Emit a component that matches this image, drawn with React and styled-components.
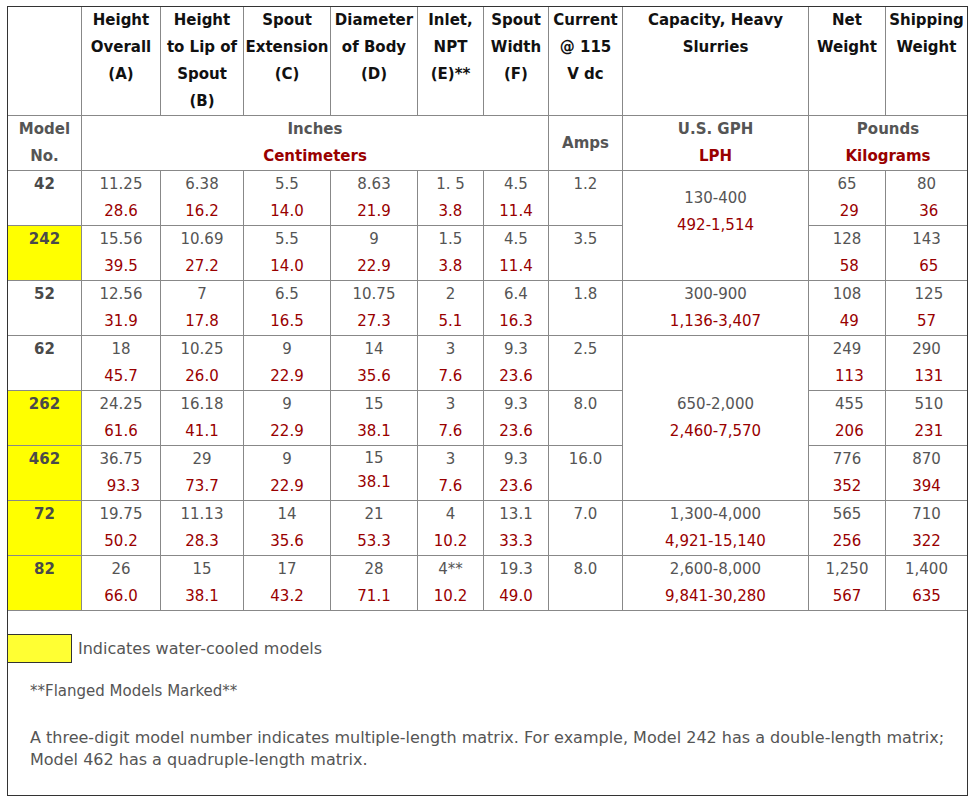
import React from "react";
import styled, { createGlobalStyle } from "styled-components";

const GlobalStyle = createGlobalStyle`
  body {
    margin: 0;
    background: #fff;
    font-family: "DejaVu Sans", Verdana, sans-serif;
  }
`;

const Page = styled.div`
  padding: 6px 6px 0 7px;
`;

const Frame = styled.div`
  width: 959px;
  border: 1px solid #333;
  padding-bottom: 24px;
`;

const Table = styled.table`
  width: 959px;
  table-layout: fixed;
  border-collapse: separate;
  border-spacing: 0;
  font-size: 15px;
  line-height: 27px;
`;

const Cell = styled.td`
  padding: 0;
  text-align: center;
  vertical-align: ${(p) => p.$valign || "top"};
  border-right: 1px solid #888;
  border-bottom: 1px solid #888;
  background: ${(p) => (p.$cooled ? "#ffff00" : "transparent")};
  color: #555;
  white-space: nowrap;
  line-height: ${(p) => (p.$tight ? "24px" : "27px")};
  &:last-child {
    border-right: none;
  }
`;

const HeadCell = styled(Cell).attrs({ as: "th" })`
  color: #111;
  font-weight: bold;
  height: 108px;
`;

const UnitCell = styled(Cell).attrs({ as: "th" })`
  font-weight: bold;
  height: 54px;
  vertical-align: middle;
`;

const DataRow = styled.tr`
  height: 55px;
`;

const Model = styled.span`
  font-weight: bold;
  color: #4a4a4a;
`;

const Line = styled.div`
  color: ${(p) => (p.$metric ? "#990000" : "#555")};
  white-space: pre;
`;

const Legend = styled.div`
  display: flex;
  align-items: center;
  gap: 6px;
  margin: 23px 0 0 -1px;
  font-size: 16px;
  color: #555;
`;

const Swatch = styled.div`
  width: 63px;
  height: 27px;
  border: 1px solid #333;
  background: #ffff33;
`;

const Note = styled.p`
  margin: ${(p) => p.$top}px 0 0 22px;
  font-size: ${(p) => p.$size || 16}px;
  line-height: 22px;
  color: #555;
  padding-right: 14px;
`;

const widths = [74, 79, 83, 87, 87, 66, 65, 74, 186, 77, 81];

const headers = [
  [],
  ["Height", "Overall", "(A)"],
  ["Height", "to Lip of", "Spout", "(B)"],
  ["Spout", "Extension", "(C)"],
  ["Diameter", "of Body", "(D)"],
  ["Inlet,", "NPT", "(E)**"],
  ["Spout", "Width", "(F)"],
  ["Current", "@ 115", "V dc"],
  ["Capacity, Heavy", "Slurries"],
  ["Net", "Weight"],
  ["Shipping", "Weight"],
];

const nb = "\u00a0";

const rows = [
  {
    model: "42",
    vals: [["11.25", "28.6"], ["6.38", "16.2"], ["5.5", "14.0"], ["8.63", "21.9"], ["1. 5", "3.8"], ["4.5", "11.4"]],
    amps: "1.2",
    cap: { span: 2, v: ["130-400", "492-1,514", " "] },
    net: ["65", nb + "29"],
    ship: ["80", nb + "36"],
  },
  {
    model: "242",
    cooled: true,
    vals: [["15.56", "39.5"], ["10.69", "27.2"], ["5.5", "14.0"], ["9", "22.9"], ["1.5", "3.8"], ["4.5", "11.4"]],
    amps: "3.5",
    net: ["128", nb + "58"],
    ship: ["143", nb + "65"],
  },
  {
    model: "52",
    vals: [["12.56", "31.9"], ["7", "17.8"], ["6.5", "16.5"], ["10.75", "27.3"], ["2", "5.1"], ["6.4", "16.3"]],
    amps: "1.8",
    cap: { span: 1, v: ["300-900", "1,136-3,407"] },
    net: ["108", nb + "49"],
    ship: [nb + "125", "57"],
  },
  {
    model: "62",
    vals: [["18", "45.7"], ["10.25", "26.0"], ["9", "22.9"], ["14", "35.6"], ["3", "7.6"], ["9.3", "23.6"]],
    amps: "2.5",
    cap: { span: 3, v: ["650-2,000", "2,460-7,570"] },
    net: ["249", nb + "113"],
    ship: ["290", nb + "131"],
  },
  {
    model: "262",
    cooled: true,
    vals: [["24.25", "61.6"], ["16.18", "41.1"], ["9", "22.9"], ["15", "38.1"], ["3", "7.6"], ["9.3", "23.6"]],
    amps: "8.0",
    net: [nb + "455", nb + "206"],
    ship: [nb + "510", nb + "231"],
  },
  {
    model: "462",
    cooled: true,
    vals: [["36.75", nb + "93.3"], ["29", "73.7"], ["9", "22.9"], ["15", "38.1", true], ["3", "7.6"], ["9.3", "23.6"]],
    amps: "16.0",
    net: ["776", "352"],
    ship: ["870", "394"],
  },
  {
    model: "72",
    cooled: true,
    vals: [["19.75", "50.2"], ["11.13", "28.3"], ["14", "35.6"], ["21", "53.3"], ["4", "10.2"], ["13.1", "33.3"]],
    amps: "7.0",
    cap: { span: 1, v: ["1,300-4,000", "4,921-15,140"] },
    net: ["565", "256"],
    ship: ["710", "322"],
  },
  {
    model: "82",
    cooled: true,
    vals: [["26", "66.0"], ["15", "38.1"], ["17", "43.2"], ["28", "71.1"], ["4**", "10.2"], ["19.3", "49.0"]],
    amps: "8.0",
    cap: { span: 1, v: ["2,600-8,000", "9,841-30,280"] },
    net: ["1,250", "567"],
    ship: ["1,400", "635"],
  },
];

const Pair = ({ v, valign, tight, rowSpan }) => (
  <Cell $valign={valign} $tight={tight} rowSpan={rowSpan}>
    <Line>{v[0]}</Line>
    <Line $metric>{v[1]}</Line>
    {v[2] && <Line>{v[2]}</Line>}
  </Cell>
);

export default function App() {
  return (
    <Page>
      <GlobalStyle />
      <Frame>
        <Table>
          <colgroup>
            {widths.map((w, i) => (
              <col key={i} style={{ width: w }} />
            ))}
          </colgroup>
          <tbody>
            <tr>
              {headers.map((h, i) => (
                <HeadCell key={i}>
                  {h.map((t) => (
                    <div key={t}>{t}</div>
                  ))}
                </HeadCell>
              ))}
            </tr>
            <tr>
              <UnitCell>
                <div>Model</div>
                <div>No.</div>
              </UnitCell>
              <UnitCell colSpan={6}>
                <Line>Inches</Line>
                <Line $metric>Centimeters</Line>
              </UnitCell>
              <UnitCell>Amps</UnitCell>
              <UnitCell>
                <Line>U.S. GPH</Line>
                <Line $metric>LPH</Line>
              </UnitCell>
              <UnitCell colSpan={2}>
                <Line>Pounds</Line>
                <Line $metric>Kilograms</Line>
              </UnitCell>
            </tr>
            {rows.map((r) => (
              <DataRow key={r.model}>
                <Cell $cooled={r.cooled}>
                  <Model>{r.model}</Model>
                </Cell>
                {r.vals.map((v, i) => (
                  <Pair key={i} v={v} tight={v[2]} />
                ))}
                <Cell>{r.amps}</Cell>
                {r.cap && <Pair v={r.cap.v} valign="middle" rowSpan={r.cap.span} />}
                <Pair v={r.net} />
                <Pair v={r.ship} />
              </DataRow>
            ))}
          </tbody>
        </Table>
        <Legend>
          <Swatch />
          <span>Indicates water-cooled models</span>
        </Legend>
        <Note $top={17} $size={15}>**Flanged Models Marked**</Note>
        <Note $top={25}>
          A three-digit model number indicates multiple-length matrix. For example, Model 242 has a double-length matrix;
          Model 462 has a quadruple-length matrix.
        </Note>
      </Frame>
    </Page>
  );
}
